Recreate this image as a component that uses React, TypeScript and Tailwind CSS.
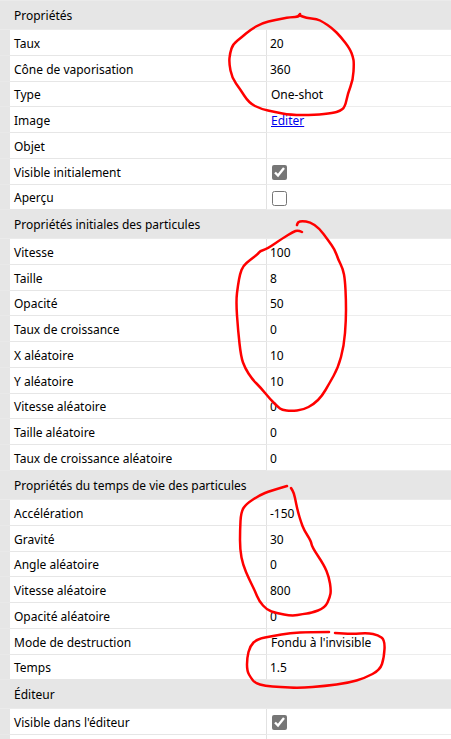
import React, { useState } from "react";

type Value =
  | { kind: "text"; text: string }
  | { kind: "choice"; text: string }
  | { kind: "link"; text: string }
  | { kind: "check"; checked: boolean };

interface Property {
  id: string;
  label: string;
  value: Value;
}

interface Section {
  title: string;
  rows: Property[];
}

const text = (value: string): Value => ({ kind: "text", text: value });

const SECTIONS: Section[] = [
  {
    title: "Propriétés",
    rows: [
      { id: "rate", label: "Taux", value: text("20") },
      { id: "cone", label: "Cône de vaporisation", value: text("360") },
      { id: "type", label: "Type", value: { kind: "choice", text: "One-shot" } },
      { id: "image", label: "Image", value: { kind: "link", text: "Editer" } },
      { id: "object", label: "Objet", value: text("") },
      { id: "visible", label: "Visible initialement", value: { kind: "check", checked: true } },
      { id: "preview", label: "Aperçu", value: { kind: "check", checked: false } },
    ],
  },
  {
    title: "Propriétés initiales des particules",
    rows: [
      { id: "speed", label: "Vitesse", value: text("100") },
      { id: "size", label: "Taille", value: text("8") },
      { id: "opacity", label: "Opacité", value: text("50") },
      { id: "growth", label: "Taux de croissance", value: text("0") },
      { id: "x-random", label: "X aléatoire", value: text("10") },
      { id: "y-random", label: "Y aléatoire", value: text("10") },
      { id: "speed-random", label: "Vitesse aléatoire", value: text("0") },
      { id: "size-random", label: "Taille aléatoire", value: text("0") },
      { id: "growth-random", label: "Taux de croissance aléatoire", value: text("0") },
    ],
  },
  {
    title: "Propriétés du temps de vie des particules",
    rows: [
      { id: "acceleration", label: "Accélération", value: text("-150") },
      { id: "gravity", label: "Gravité", value: text("30") },
      { id: "life-angle", label: "Angle aléatoire", value: text("0") },
      { id: "life-speed", label: "Vitesse aléatoire", value: text("800") },
      { id: "life-opacity", label: "Opacité aléatoire", value: text("0") },
      { id: "destroy", label: "Mode de destruction", value: { kind: "choice", text: "Fondu à l'invisible" } },
      { id: "timeout", label: "Temps", value: text("1.5") },
    ],
  },
  {
    title: "Éditeur",
    rows: [
      { id: "editor-visible", label: "Visible dans l'éditeur", value: { kind: "check", checked: true } },
    ],
  },
];

// Hand-drawn marker strokes, as lists of points
const STROKES: number[][][] = [
  [
    [300, 14], [299, 17], [291, 17], [275, 20], [262, 23], [250, 30], [242, 37], [233, 44], [230, 53], [229, 63],
    [232, 78], [240, 89], [249, 103], [261, 109], [275, 112], [290, 115], [315, 115], [333, 113], [340, 111],
    [345, 107], [348, 93], [353, 80], [354, 63], [353, 57], [350, 49], [341, 37], [332, 28], [323, 22], [317, 19],
    [306, 18], [299, 15],
  ],
  [
    [302, 232], [298, 230], [293, 232], [283, 238], [267, 249], [260, 251], [258, 254], [250, 260], [243, 266],
    [240, 274], [238, 285], [236, 301], [238, 330], [241, 357], [245, 368], [252, 379], [261, 388], [270, 399],
    [278, 407], [282, 410], [291, 411], [303, 410], [314, 404], [322, 396], [329, 384], [338, 368], [344, 346],
    [346, 320], [346, 300], [345, 280], [343, 269], [338, 259], [335, 250], [328, 240], [319, 228], [310, 222],
    [302, 221], [298, 222], [297, 225],
  ],
  [
    [287, 486], [270, 491], [260, 495], [246, 504], [241, 512], [240, 530], [240, 550], [243, 565], [249, 579],
    [255, 591], [259, 601], [267, 610], [276, 613], [292, 616], [303, 614], [311, 613], [325, 608], [330, 597],
    [331, 590], [329, 577], [324, 565], [312, 547], [311, 541], [304, 530], [301, 522], [298, 512], [296, 503],
    [294, 493], [291, 488],
  ],
  [
    [329, 632], [310, 632], [290, 633], [273, 636], [257, 639], [250, 646], [247, 658], [247, 671], [251, 678],
    [255, 683], [265, 686], [280, 687], [300, 688], [325, 686], [348, 683], [365, 678], [380, 670], [384, 658],
    [385, 640], [378, 635], [368, 633], [352, 634], [335, 633],
  ],
];

// Rounds the corners by curving through the midpoint of every segment
function smoothPath(points: number[][]) {
  let d = `M${points[0][0]} ${points[0][1]}`;
  for (let i = 1; i < points.length - 1; i++) {
    const [x, y] = points[i];
    const [nx, ny] = points[i + 1];
    d += ` Q${x} ${y} ${(x + nx) / 2} ${(y + ny) / 2}`;
  }
  const last = points[points.length - 1];
  return `${d} L${last[0]} ${last[1]}`;
}

function CheckValue({ id, initial }: { id: string; initial: boolean }) {
  const [checked, setChecked] = useState(initial);
  return (
    <input
      id={id}
      type="checkbox"
      checked={checked}
      onChange={(e) => setChecked(e.target.checked)}
      className="ml-[5px] block size-[15px] accent-[#767676]"
    />
  );
}

function PropertyRow({ id, label, value }: Property) {
  return (
    <tr className="h-[26px] nth-[4n]:h-[25px]">
      <td className="border-b border-[#e9e9e9] bg-[#e6e6e6] p-0" />
      <th scope="row" className="border-b border-[#e6e6e6] pt-[2px] pb-0 pl-1 text-left font-normal">
        {value.kind === "check" ? <label htmlFor={id}>{label}</label> : label}
      </th>
      <td className="border-b border-l border-b-[#ededed] border-l-[#e2e2e2] px-0 pt-[2px] pb-0">
        {value.kind === "text" && <span className="pl-[3px]">{value.text}</span>}
        {value.kind === "choice" && <span className="pl-1">{value.text}</span>}
        {value.kind === "link" && (
          <a href="#image" className="ml-1 text-[#0000ee] underline">
            {value.text}
          </a>
        )}
        {value.kind === "check" && <CheckValue id={id} initial={value.checked} />}
      </td>
    </tr>
  );
}

export default function App() {
  return (
    <div className="relative overflow-hidden border-t border-[#ebebeb] bg-white font-['Noto_Sans','Open_Sans',sans-serif] text-[12px] leading-4 text-black">
      <table className="w-full table-fixed border-separate border-spacing-0">
        <colgroup>
          <col className="w-[10px]" />
          <col className="w-64" />
          <col />
        </colgroup>
        {SECTIONS.map((section) => (
          <tbody key={section.title}>
            <tr className="h-[29px]">
              <th
                colSpan={3}
                scope="rowgroup"
                className="border-b border-[#ebebeb] bg-[#e6e6e6] pt-[2px] pb-0 pl-[14px] text-left font-normal"
              >
                {section.title}
              </th>
            </tr>
            {section.rows.map((row) => (
              <PropertyRow key={row.id} {...row} />
            ))}
          </tbody>
        ))}
        <tbody>
          <tr className="h-1">
            <td className="bg-[#e6e6e6] p-0" />
            <td className="p-0" />
            <td className="border-l border-[#e2e2e2] p-0" />
          </tr>
        </tbody>
      </table>

      {/* Marker circles over the values */}
      <svg
        className="pointer-events-none absolute -top-px left-0"
        width="451"
        height="739"
        fill="none"
        stroke="#ff0000"
        strokeWidth="2.5"
        strokeLinecap="round"
        strokeLinejoin="round"
        aria-hidden="true"
      >
        {STROKES.map((points, i) => (
          <path key={i} d={smoothPath(points)} />
        ))}
      </svg>
    </div>
  );
}
